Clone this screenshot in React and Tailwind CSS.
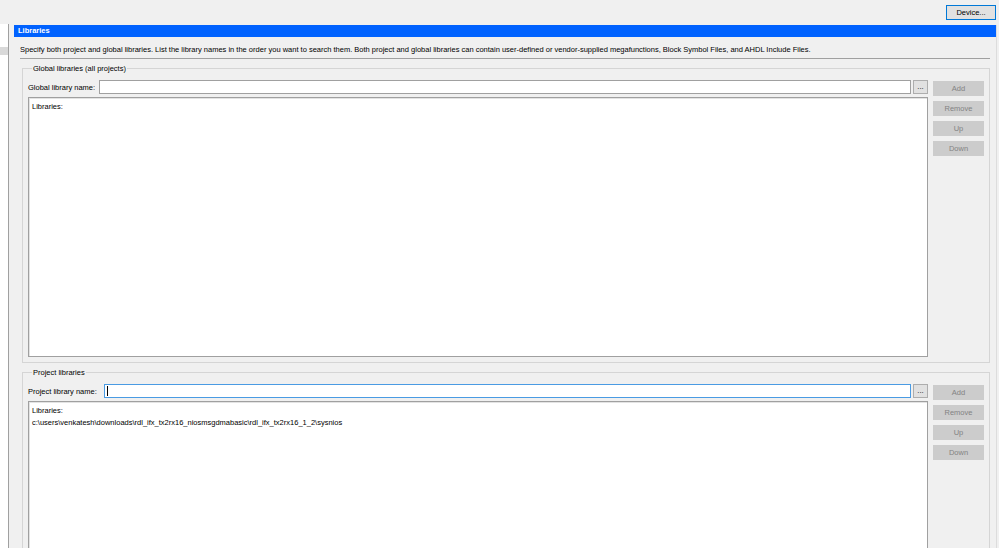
export default function App() {
    const font = { fontFamily: '"Liberation Sans", Arial, sans-serif' };

    return (
        <div className="w-[999px] h-[548px] bg-[#f0f0f0] overflow-hidden flex flex-col text-[7.5px] leading-[11px] text-black" style={font}>
            {/* Top toolbar */}
            <div className="h-[24px] shrink-0 flex justify-end items-start pt-[5px] pr-[3px]">
                <button className="w-[50px] h-[15px] bg-[#e1e1e1] border border-[#0078d7] text-[7.5px] leading-[13px]">
                    Device...
                </button>
            </div>

            <div className="flex-1 flex min-h-0">
                {/* Left tree panel edge */}
                <div className="w-[9px] bg-white border-r border-[#a0a0a0] pt-[23px]">
                    <div className="h-[8px] bg-[#d9d9d9]"></div>
                </div>

                {/* Libraries page */}
                <div className="flex-1 ml-[5px] mr-[2px] mt-[1px] flex flex-col border-r border-[#dcdcdc]">
                    <div className="h-[12px] bg-[#0062ff] text-white font-bold px-[4px] leading-[12px]">
                        Libraries
                    </div>

                    <div className="flex flex-col pl-[6px] pr-[6px]">
                        <div className="pt-[7px] pb-[2px] leading-[12px] border-b border-[#a0a0a0]">
                            Specify both project and global libraries. List the library names in the order you want to search them. Both project and global libraries can contain user-defined or vendor-supplied megafunctions, Block Symbol Files, and AHDL Include Files.
                        </div>

                        {/* Global libraries */}
                        <fieldset className="mt-[4px] ml-[2px] border border-[#d5d5d5] px-[5px] pr-[5px] pb-[5px]">
                            <legend className="ml-[4px] px-[1px] leading-[11px]">Global libraries (all projects)</legend>
                            <div className="flex pt-[6px] gap-[5px]">
                                <div className="flex-1 flex flex-col gap-[3px]">
                                    <div className="flex items-center h-[14px]">
                                        <span className="w-[71px] shrink-0">Global library name:</span>
                                        <div className="flex-1 h-[14px] bg-white border border-[#a0a0a0]"></div>
                                        <button className="ml-[2px] w-[15px] h-[14px] bg-[#e1e1e1] border border-[#adadad] leading-[10px] text-[7.5px]">...</button>
                                    </div>
                                    <div className="h-[260px] bg-white border border-[#a0a0a0] shadow-[inset_1px_1px_0_#e3e3e3] px-[3px] pt-[3px]">
                                        Libraries:
                                    </div>
                                </div>
                                <div className="w-[51px] flex flex-col gap-[5px] pt-[1px]">
                                    <button className="h-[15px] bg-[#cccccc] text-[#838383] text-[7.5px]">Add</button>
                                    <button className="h-[15px] bg-[#cccccc] text-[#838383] text-[7.5px]">Remove</button>
                                    <button className="h-[15px] bg-[#cccccc] text-[#838383] text-[7.5px]">Up</button>
                                    <button className="h-[15px] bg-[#cccccc] text-[#838383] text-[7.5px]">Down</button>
                                </div>
                            </div>
                        </fieldset>

                        {/* Project libraries */}
                        <fieldset className="mt-[4px] ml-[2px] border border-[#d5d5d5] px-[5px] pr-[5px] h-[260px]">
                            <legend className="ml-[4px] px-[1px] leading-[11px]">Project libraries</legend>
                            <div className="flex pt-[6px] gap-[5px]">
                                <div className="flex-1 flex flex-col gap-[3px]">
                                    <div className="flex items-center h-[14px]">
                                        <span className="w-[76px] shrink-0">Project library name:</span>
                                        <div className="flex-1 h-[14px] bg-white border border-[#4a9be3] flex items-center pl-[2px]">
                                            <div className="w-px h-[10px] bg-black"></div>
                                        </div>
                                        <button className="ml-[2px] w-[15px] h-[14px] bg-[#e1e1e1] border border-[#adadad] leading-[10px] text-[7.5px]">...</button>
                                    </div>
                                    <div className="h-[220px] bg-white border border-[#a0a0a0] shadow-[inset_1px_1px_0_#e3e3e3] px-[3px] pt-[3px]">
                                        <div className="leading-[12px]">Libraries:</div>
                                        <div className="leading-[12px]">c:\users\venkatesh\downloads\rdl_ifx_tx2rx16_niosmsgdmabasic\rdl_ifx_tx2rx16_1_2\sysnios</div>
                                    </div>
                                </div>
                                <div className="w-[51px] flex flex-col gap-[5px] pt-[1px]">
                                    <button className="h-[15px] bg-[#cccccc] text-[#838383] text-[7.5px]">Add</button>
                                    <button className="h-[15px] bg-[#cccccc] text-[#838383] text-[7.5px]">Remove</button>
                                    <button className="h-[15px] bg-[#cccccc] text-[#838383] text-[7.5px]">Up</button>
                                    <button className="h-[15px] bg-[#cccccc] text-[#838383] text-[7.5px]">Down</button>
                                </div>
                            </div>
                        </fieldset>
                    </div>
                </div>
            </div>
        </div>
    );
}
